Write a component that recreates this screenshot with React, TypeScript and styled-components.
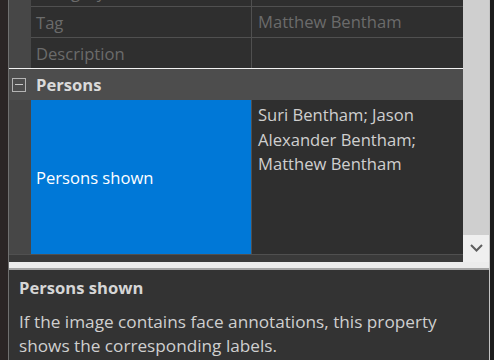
import React from 'react';
import styled, { createGlobalStyle } from 'styled-components';

const GlobalStyle = createGlobalStyle`
  html, body {
    margin: 0;
    padding: 0;
    background: #2a2424;
  }
  body {
    font-family: "Open Sans", "Noto Sans", sans-serif;
    overflow: hidden;
  }
`;

const Window = styled.div`
  width: 494px;
  height: 360px;
  display: flex;
  background: #2b2525;
  overflow: hidden;
`;

const Frame = styled.div`
  margin-left: 8px;
  width: 480px;
  height: 360px;
  display: flex;
  flex-direction: column;
  border-left: 1px solid #707070;
  border-right: 1px solid #c4c4c4;
`;

const RightEdge = styled.div`
  flex: 1;
  background: #1c1c1c;
`;

const GridArea = styled.div`
  height: 262px;
  display: flex;
`;

const Grid = styled.div`
  flex: 1;
  background: #3a3a3a;
  overflow: hidden;
`;

const Rows = styled.div`
  margin-top: -24px;
  font-size: 16.6px;
`;

const PropRow = styled.div<{ $h: number; $bottom?: boolean }>`
  display: flex;
  height: ${p => p.$h}px;
  border-bottom: ${p => (p.$bottom ? '1px solid #505050' : 'none')};
  background: #2f2f2f;
`;

const Margin = styled.div`
  width: 22px;
  flex: none;
  background: #474747;
`;

const NameCell = styled.div<{ $selected?: boolean; $noTop?: boolean; $disabled?: boolean }>`
  width: 215px;
  flex: none;
  display: flex;
  align-items: center;
  padding-left: 5px;
  border-right: 1px solid #505050;
  border-top: ${p => (p.$noTop ? 'none' : '1px solid #505050')};
  background: ${p => (p.$selected ? '#0078d7' : 'transparent')};
  color: ${p => (p.$selected ? '#ffffff' : p.$disabled ? '#6b6b6b' : '#cfcfcf')};
  white-space: nowrap;
`;

const ValueCell = styled.div<{ $noTop?: boolean; $disabled?: boolean; $top?: boolean }>`
  flex: 1;
  display: flex;
  align-items: ${p => (p.$top ? 'flex-start' : 'center')};
  padding: ${p => (p.$top ? '3px 10px 0 6px' : '0 10px 0 6px')};
  border-top: ${p => (p.$noTop ? 'none' : '1px solid #505050')};
  color: ${p => (p.$disabled ? '#6b6b6b' : '#cfcfcf')};
  line-height: 24.5px;
`;

const CategoryRow = styled.div`
  display: flex;
  align-items: center;
  height: 31px;
  border-top: 1px solid #f2f2f2;
  background: #4d4d4d;
  color: #dadada;
  font-weight: 700;
`;

const Toggle = styled.div`
  width: 12px;
  height: 12px;
  margin: 0 10px 0 3px;
  border: 1px solid #b4b4b4;
  display: flex;
  align-items: center;
  justify-content: center;
  &::after {
    content: '';
    width: 8px;
    height: 1px;
    background: #c8c8c8;
  }
`;

const Scrollbar = styled.div`
  width: 26px;
  display: flex;
  flex-direction: column;
  justify-content: flex-end;
  background: #cfcfcf;
`;

const ScrollButton = styled.div`
  height: 27px;
  background: #efefef;
  display: flex;
  align-items: center;
  justify-content: center;
`;

const Splitter = styled.div`
  height: 6px;
  background: #ececec;
  border-bottom: 2px solid #a4a4a4;
`;

const HelpPane = styled.div`
  flex: 1;
  background: #333333;
  padding: 7px 20px 0 10px;
  color: #cfcfcf;
`;

const HelpTitle = styled.div`
  font-size: 16.6px;
  font-weight: 700;
  line-height: 22px;
  color: #d6d6d6;
`;

const HelpText = styled.div`
  margin-top: 11px;
  font-size: 17.2px;
  line-height: 23.5px;
`;

export default function App() {
  return (
    <>
      <GlobalStyle />
      <Window>
        <Frame>
          <GridArea>
            <Grid>
              <Rows>
                <PropRow $h={30}>
                  <Margin />
                  <NameCell $disabled>Category</NameCell>
                  <ValueCell $disabled />
                </PropRow>
                <PropRow $h={31}>
                  <Margin />
                  <NameCell $disabled>Tag</NameCell>
                  <ValueCell $disabled>Matthew Bentham</ValueCell>
                </PropRow>
                <PropRow $h={31}>
                  <Margin />
                  <NameCell $disabled>Description</NameCell>
                  <ValueCell $disabled />
                </PropRow>
                <CategoryRow>
                  <Toggle />
                  Persons
                </CategoryRow>
                <PropRow $h={154} $bottom>
                  <Margin />
                  <NameCell $selected $noTop>Persons shown</NameCell>
                  <ValueCell $noTop $top>
                    Suri Bentham; Jason Alexander Bentham; Matthew Bentham
                  </ValueCell>
                </PropRow>
              </Rows>
            </Grid>
            <Scrollbar>
              <ScrollButton>
                <svg width="26" height="27" viewBox="0 0 26 27">
                  <polyline
                    points="8,10 13.5,15.5 19,10"
                    fill="none"
                    stroke="#5e5e5e"
                    strokeWidth="2"
                  />
                </svg>
              </ScrollButton>
            </Scrollbar>
          </GridArea>
          <Splitter />
          <HelpPane>
            <HelpTitle>Persons shown</HelpTitle>
            <HelpText>
              If the image contains face annotations, this property shows the corresponding labels.
            </HelpText>
          </HelpPane>
        </Frame>
        <RightEdge />
      </Window>
    </>
  );
}
